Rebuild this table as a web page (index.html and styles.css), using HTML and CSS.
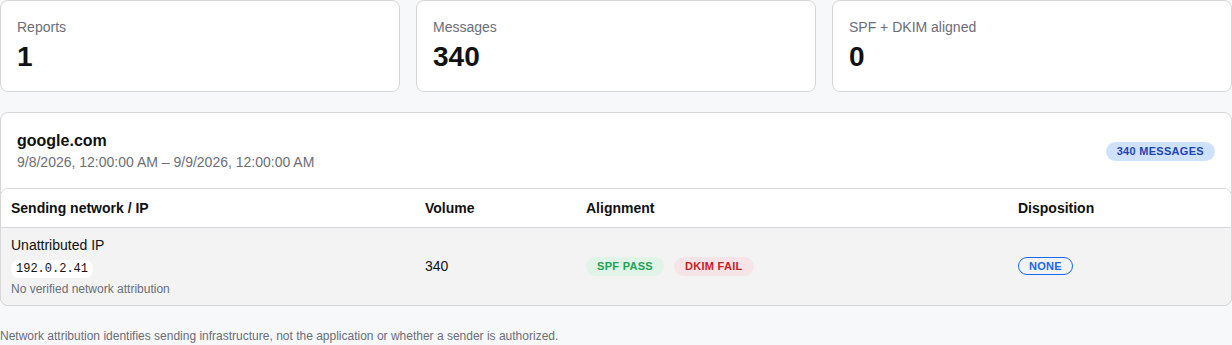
FILE: index.html
```html
<!DOCTYPE html>
<html lang="en">
<head>
    <meta charset="UTF-8">
    <meta name="viewport" content="width=device-width, initial-scale=1.0">
    <title>DMARC reports</title>
    <link rel="stylesheet" href="styles.css">
</head>
<body>
    <div class="stats">
        <div class="stat">
            <span class="stat-label">Reports</span>
            <span class="stat-value">1</span>
        </div>
        <div class="stat">
            <span class="stat-label">Messages</span>
            <span class="stat-value">340</span>
        </div>
        <div class="stat">
            <span class="stat-label">SPF + DKIM aligned</span>
            <span class="stat-value">0</span>
        </div>
    </div>

    <div class="report">
        <div class="report-head">
            <div>
                <div class="report-domain">google.com</div>
                <div class="report-range">9/8/2026, 12:00:00 AM – 9/9/2026, 12:00:00 AM</div>
            </div>
            <span class="badge badge-count">340 messages</span>
        </div>

        <div class="table-wrap">
            <table>
                <thead>
                    <tr>
                        <th class="col-ip">Sending network / IP</th>
                        <th class="col-vol">Volume</th>
                        <th class="col-align">Alignment</th>
                        <th>Disposition</th>
                    </tr>
                </thead>
                <tbody>
                    <tr>
                        <td>
                            <div class="net-name">Unattributed IP</div>
                            <code class="ip">192.0.2.41</code>
                            <div class="net-note">No verified network attribution</div>
                        </td>
                        <td>340</td>
                        <td>
                            <span class="badge badge-pass">SPF pass</span>
                            <span class="badge badge-fail">DKIM fail</span>
                        </td>
                        <td><span class="badge badge-outline">none</span></td>
                    </tr>
                </tbody>
            </table>
        </div>
    </div>

    <p class="footnote">Network attribution identifies sending infrastructure, not the application or whether a sender is authorized.</p>
</body>
</html>
```

FILE: styles.css
```css
* {
    box-sizing: border-box;
    padding: 0;
    margin: 0;
}

body {
    font-family: "Liberation Sans", Arial, Helvetica, sans-serif;
    background-color: #f7f8fa;
    color: #111;
}

.stats {
    display: grid;
    grid-template-columns: 1fr 1fr 1fr;
    gap: 16px;
}

.stat {
    display: flex;
    flex-direction: column;
    height: 92px;
    padding: 17px 16px;
    background-color: #fff;
    border: 1px solid #d6d7db;
    border-radius: 8px;
}

.stat-label {
    font-size: 14px;
    color: #6b6e76;
    line-height: 18px;
}

.stat-value {
    margin-top: 5px;
    font-size: 28px;
    font-weight: bold;
    line-height: 32px;
}

.report {
    margin-top: 20px;
    background-color: #fff;
    border: 1px solid #d6d7db;
    border-radius: 8px;
}

.report-head {
    display: flex;
    justify-content: space-between;
    align-items: center;
    padding: 18px 16px 17px 16px;
}

.report-domain {
    font-size: 16px;
    font-weight: bold;
    line-height: 20px;
}

.report-range {
    margin-top: 2px;
    font-size: 14px;
    color: #6b6e76;
    line-height: 18px;
}

.badge {
    display: inline-block;
    padding: 0 11px;
    border-radius: 10px;
    font-size: 11px;
    font-weight: bold;
    line-height: 19px;
    text-transform: uppercase;
    letter-spacing: 0.3px;
}

.badge-count {
    background-color: #cfe2fd;
    color: #1f45b0;
}

.badge-pass {
    background-color: #e2f3e8;
    color: #1fa254;
}

.badge-fail {
    margin-left: 6px;
    background-color: #f7e4e6;
    color: #c61f2c;
}

.badge-outline {
    border: 1px solid #1668f0;
    line-height: 16px;
    color: #1668f0;
    padding: 0 10px;
}

.table-wrap {
    margin: 0 -1px -1px -1px;
    border: 1px solid #d6d7db;
    border-radius: 8px;
    overflow: hidden;
}

table {
    width: 100%;
    border-collapse: collapse;
    font-size: 14px;
}

th {
    text-align: left;
    padding: 11px 10px 11px 10px;
    line-height: 16px;
    background-color: #fff;
    border-bottom: 1px solid #d6d7db;
}

.col-ip {
    width: 414px;
}

.col-vol {
    width: 161px;
}

.col-align {
    width: 432px;
}

td {
    padding: 8px 10px 9px 10px;
    background-color: #f3f3f3;
    vertical-align: middle;
    line-height: 16px;
}

.net-name {
    line-height: 18px;
}

.ip {
    display: inline-block;
    margin-top: 6px;
    padding: 0 5px;
    font-family: "Liberation Mono", monospace;
    font-size: 12px;
    line-height: 18px;
    background-color: #fff;
    border-radius: 8px;
}

.net-note {
    margin-top: 4px;
    font-size: 12px;
    color: #6b6e76;
    line-height: 14px;
}

.footnote {
    margin-top: 23px;
    font-size: 12px;
    color: #6b6e76;
    line-height: 14px;
}
```
